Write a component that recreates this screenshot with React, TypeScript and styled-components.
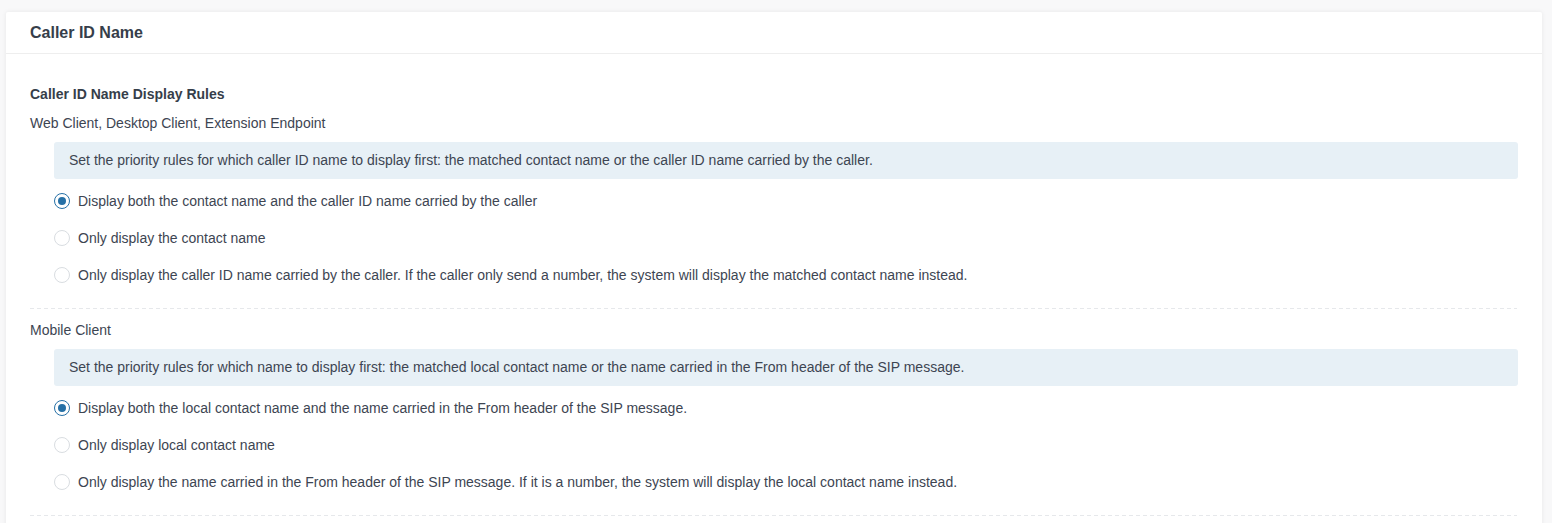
import React, { useState } from "react";
import styled, { createGlobalStyle } from "styled-components";

const GlobalStyle = createGlobalStyle`
  html, body {
    margin: 0;
    padding: 0;
    background: #f8f8f9;
    font-family: "Liberation Sans", Arial, sans-serif;
  }
`;

const Page = styled.div`
  padding: 12px 10px 0 6px;
  height: 523px;
  box-sizing: border-box;
  overflow: hidden;
`;

const Card = styled.div`
  background: #ffffff;
  border-radius: 2px;
  box-shadow: 0 0 5px rgba(0, 0, 0, 0.07);
  min-height: 540px;
`;

const CardHeader = styled.div`
  height: 42px;
  box-sizing: border-box;
  display: flex;
  align-items: center;
  padding: 0 24px;
  border-bottom: 1px solid #eeeeee;
`;

const Title = styled.h2`
  margin: 0;
  font-size: 16px;
  font-weight: 700;
  color: #363e4a;
  line-height: 20px;
`;

const CardBody = styled.div`
  padding: 30px 24px 0 24px;
`;

const SectionTitle = styled.div`
  font-size: 14px;
  font-weight: 700;
  color: #363e4a;
  line-height: 20px;
  margin-bottom: 9px;
`;

const Group = styled.div`
  display: flex;
  flex-direction: column;
`;

const GroupLabel = styled.div`
  font-size: 14px;
  color: #3d4552;
  line-height: 20px;
`;

const Indent = styled.div`
  padding-left: 24px;
`;

const InfoBox = styled.div`
  margin-top: 9px;
  background: #e7f0f6;
  border-radius: 3px;
  padding: 8px 15px;
  height: 37px;
  box-sizing: border-box;
  font-size: 14px;
  line-height: 21px;
  color: #3d4552;
`;

const RadioList = styled.div`
  display: flex;
  flex-direction: column;
  gap: 17px;
  margin-top: 12px;
`;

const RadioRow = styled.label`
  display: flex;
  align-items: center;
  gap: 8px;
  height: 20px;
  cursor: pointer;
  font-size: 14px;
  color: #3d4552;
`;

const RadioCircle = styled.span<{ $checked: boolean }>`
  width: 16px;
  height: 16px;
  box-sizing: border-box;
  border-radius: 50%;
  border: 1px solid ${(p) => (p.$checked ? "#2670a6" : "#d9dde1")};
  background: #fff;
  display: flex;
  align-items: center;
  justify-content: center;
  flex-shrink: 0;

  &::after {
    content: "";
    width: 8px;
    height: 8px;
    border-radius: 50%;
    background: #2670a6;
    display: ${(p) => (p.$checked ? "block" : "none")};
  }
`;

const Divider = styled.div`
  height: 1px;
  margin: 23px 1px 11px 0;
  background-image: repeating-linear-gradient(
    to right,
    #e6e8eb 0,
    #e6e8eb 4px,
    transparent 4px,
    transparent 7px
  );
`;

type Option = { id: string; label: string };

const RadioGroup: React.FC<{ options: Option[]; initial: string }> = ({
  options,
  initial,
}) => {
  const [value, setValue] = useState(initial);
  return (
    <RadioList>
      {options.map((o) => (
        <RadioRow key={o.id} onClick={() => setValue(o.id)}>
          <RadioCircle $checked={value === o.id} />
          {o.label}
        </RadioRow>
      ))}
    </RadioList>
  );
};

const webOptions: Option[] = [
  { id: "both", label: "Display both the contact name and the caller ID name carried by the caller" },
  { id: "contact", label: "Only display the contact name" },
  {
    id: "carried",
    label:
      "Only display the caller ID name carried by the caller. If the caller only send a number, the system will display the matched contact name instead.",
  },
];

const mobileOptions: Option[] = [
  {
    id: "both",
    label: "Display both the local contact name and the name carried in the From header of the SIP message.",
  },
  { id: "local", label: "Only display local contact name" },
  {
    id: "from",
    label:
      "Only display the name carried in the From header of the SIP message. If it is a number, the system will display the local contact name instead.",
  },
];

export default function App() {
  return (
    <>
      <GlobalStyle />
      <Page>
        <Card>
          <CardHeader>
            <Title>Caller ID Name</Title>
          </CardHeader>
          <CardBody>
            <SectionTitle>Caller ID Name Display Rules</SectionTitle>
            <Group>
              <GroupLabel>Web Client, Desktop Client, Extension Endpoint</GroupLabel>
              <Indent>
                <InfoBox>
                  Set the priority rules for which caller ID name to display first: the matched contact name or the
                  caller ID name carried by the caller.
                </InfoBox>
                <RadioGroup options={webOptions} initial="both" />
              </Indent>
            </Group>
            <Divider />
            <Group>
              <GroupLabel>Mobile Client</GroupLabel>
              <Indent>
                <InfoBox>
                  Set the priority rules for which name to display first: the matched local contact name or the name
                  carried in the From header of the SIP message.
                </InfoBox>
                <RadioGroup options={mobileOptions} initial="both" />
              </Indent>
            </Group>
            <Divider />
          </CardBody>
        </Card>
      </Page>
    </>
  );
}
